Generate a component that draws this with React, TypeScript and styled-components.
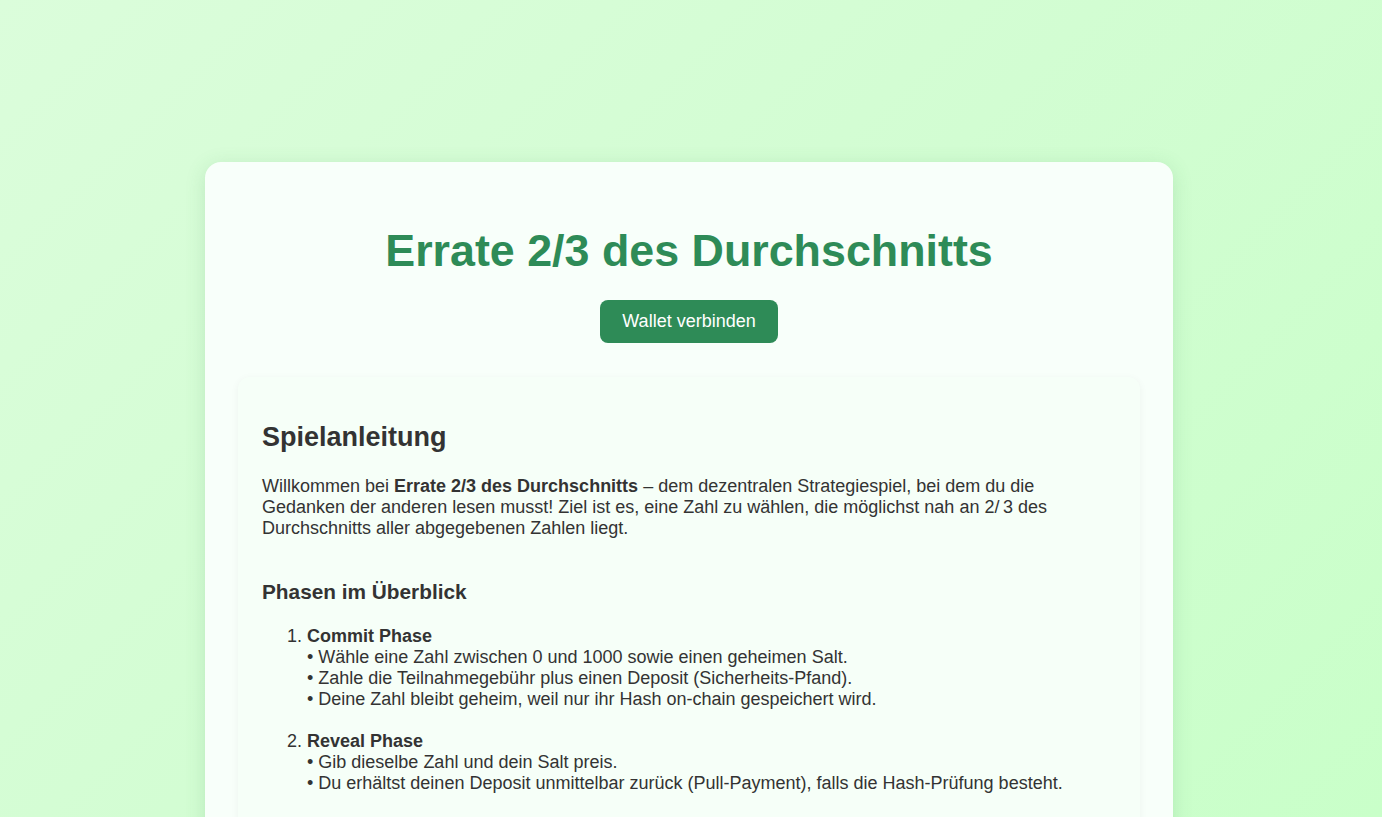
import styled, { createGlobalStyle } from "styled-components";

const GlobalStyle = createGlobalStyle`
  html, body {
    margin: 0;
    padding: 0;
  }
  body {
    min-height: 100vh;
    background: linear-gradient(135deg, #dbfddb 0%, #d2fdd2 50%, #c9ffc9 100%);
    background-attachment: fixed;
    font-family: "Liberation Sans", Arial, sans-serif;
    color: #333;
  }
`;

const Page = styled.div`
  padding: 162px 4px 40px 0;
  box-sizing: border-box;
`;

const Card = styled.main`
  width: 968px;
  margin: 0 auto;
  box-sizing: border-box;
  padding: 63px 33px 32px;
  background: #f8fffa;
  border-radius: 16px;
  box-shadow: 0 4px 20px rgba(60, 140, 80, 0.18);
  display: flex;
  flex-direction: column;
  align-items: center;
`;

const Title = styled.h1`
  margin: 0;
  font-size: 44.8px;
  font-weight: 700;
  color: #2e8b57;
  text-align: center;
`;

const WalletButton = styled.button`
  margin-top: 24px;
  font-family: "Liberation Sans", Arial, sans-serif;
  font-size: 18px;
  color: #fff;
  background: #2e8b57;
  border: none;
  border-radius: 8px;
  padding: 11px 22px;
  cursor: pointer;
`;

const Panel = styled.section`
  align-self: stretch;
  margin-top: 34px;
  padding: 45px 24px 24px;
  background: #f6fff8;
  border-radius: 12px;
  box-shadow: 0 2px 8px rgba(0, 0, 0, 0.05);
`;

const PanelTitle = styled.h2`
  margin: 0 0 23px;
  font-size: 27px;
  font-weight: 700;
`;

const Text = styled.p`
  margin: 0;
  font-size: 18px;
  line-height: 21px;
`;

const SubTitle = styled.h3`
  margin: 41px 0 22px;
  font-size: 20.8px;
  font-weight: 700;
`;

const Steps = styled.ol`
  margin: 0;
  padding-left: 45px;
  font-size: 18px;
  line-height: 21px;
`;

const Step = styled.li`
  margin-bottom: 21px;
`;

const Point = styled.div`
  &::before {
    content: "• ";
  }
`;

const phases = [
  {
    name: "Commit Phase",
    points: [
      "Wähle eine Zahl zwischen 0 und 1000 sowie einen geheimen Salt.",
      "Zahle die Teilnahmegebühr plus einen Deposit (Sicherheits-Pfand).",
      "Deine Zahl bleibt geheim, weil nur ihr Hash on-chain gespeichert wird.",
    ],
  },
  {
    name: "Reveal Phase",
    points: [
      "Gib dieselbe Zahl und dein Salt preis.",
      "Du erhältst deinen Deposit unmittelbar zurück (Pull-Payment), falls die Hash-Prüfung besteht.",
    ],
  },
];

export default function App() {
  return (
    <>
      <GlobalStyle />
      <Page>
        <Card>
          <Title>Errate 2/3 des Durchschnitts</Title>
          <WalletButton>Wallet verbinden</WalletButton>
          <Panel>
            <PanelTitle>Spielanleitung</PanelTitle>
            <Text>
              Willkommen bei <strong>Errate 2/3 des Durchschnitts</strong> – dem
              dezentralen Strategiespiel, bei dem du die Gedanken der anderen
              lesen musst! Ziel ist es, eine Zahl zu wählen, die möglichst nah an
              2/&thinsp;3 des Durchschnitts aller abgegebenen Zahlen liegt.
            </Text>
            <SubTitle>Phasen im Überblick</SubTitle>
            <Steps>
              {phases.map((p) => (
                <Step key={p.name}>
                  <strong>{p.name}</strong>
                  {p.points.map((t) => (
                    <Point key={t}>{t}</Point>
                  ))}
                </Step>
              ))}
            </Steps>
          </Panel>
        </Card>
      </Page>
    </>
  );
}
